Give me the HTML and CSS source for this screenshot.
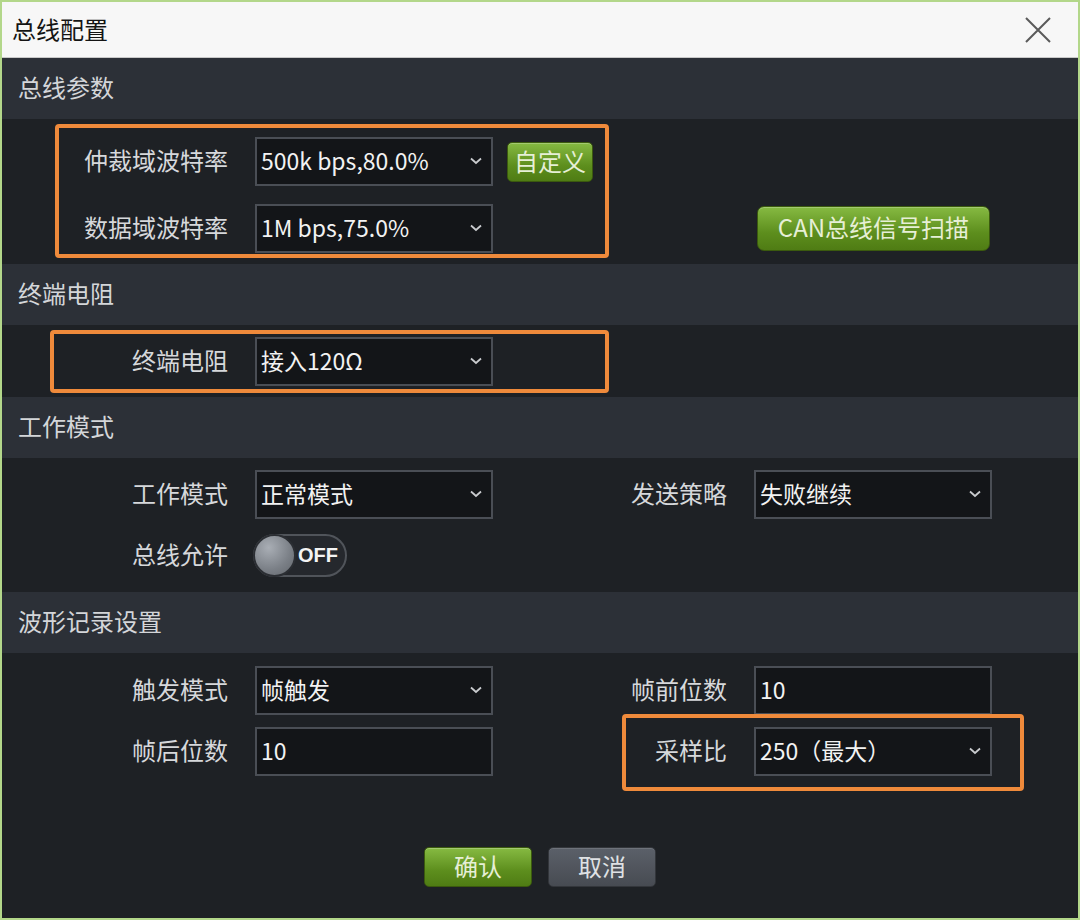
FILE: index.html
```html
<!DOCTYPE html>
<html lang="zh-CN">
<head>
  <meta charset="utf-8" />
  <title>总线配置</title>
  <link rel="stylesheet" href="styles.css">
</head>
<body>
  <div class="dialog">
    <div class="titlebar">
      <span class="title">总线配置</span>
      <svg class="close" viewBox="0 0 26 26" width="26" height="26">
        <path d="M1 1 L25 25 M25 1 L1 25" stroke="#5a5a5a" stroke-width="2" fill="none" />
      </svg>
    </div>

    <div class="group-head">总线参数</div>
    <div class="group-body body-bus">
      <div class="form-grid gap-wide">
        <span class="lbl">仲裁域波特率</span>
        <div class="select">500k bps,80.0%<svg class="chev" viewBox="0 0 12 8"><path d="M1 1.5 L6 6 L11 1.5" /></svg></div>
        <div class="cell"><button class="btn green btn-custom">自定义</button></div>
        <div></div>

        <span class="lbl">数据域波特率</span>
        <div class="select">1M bps,75.0%<svg class="chev" viewBox="0 0 12 8"><path d="M1 1.5 L6 6 L11 1.5" /></svg></div>
        <div></div>
        <div class="cell"><button class="btn green btn-scan">CAN总线信号扫描</button></div>
      </div>
      <div class="mark mark-bus"></div>
    </div>

    <div class="group-head">终端电阻</div>
    <div class="group-body body-term">
      <div class="form-grid">
        <span class="lbl">终端电阻</span>
        <div class="select">接入120Ω<svg class="chev" viewBox="0 0 12 8"><path d="M1 1.5 L6 6 L11 1.5" /></svg></div>
      </div>
      <div class="mark mark-term"></div>
    </div>

    <div class="group-head">工作模式</div>
    <div class="group-body body-mode">
      <div class="form-grid">
        <span class="lbl">工作模式</span>
        <div class="select">正常模式<svg class="chev" viewBox="0 0 12 8"><path d="M1 1.5 L6 6 L11 1.5" /></svg></div>
        <span class="lbl">发送策略</span>
        <div class="select">失败继续<svg class="chev" viewBox="0 0 12 8"><path d="M1 1.5 L6 6 L11 1.5" /></svg></div>

        <span class="lbl">总线允许</span>
        <div class="cell">
          <div class="toggle"><span class="knob"></span><span class="toggle-text">OFF</span></div>
        </div>
      </div>
    </div>

    <div class="group-head">波形记录设置</div>
    <div class="group-body body-wave">
      <div class="form-grid">
        <span class="lbl">触发模式</span>
        <div class="select">帧触发<svg class="chev" viewBox="0 0 12 8"><path d="M1 1.5 L6 6 L11 1.5" /></svg></div>
        <span class="lbl">帧前位数</span>
        <div class="select">10</div>

        <span class="lbl">帧后位数</span>
        <div class="select">10</div>
        <span class="lbl">采样比</span>
        <div class="select">250（最大）<svg class="chev" viewBox="0 0 12 8"><path d="M1 1.5 L6 6 L11 1.5" /></svg></div>
      </div>
      <div class="actions">
        <button class="btn green btn-action">确认</button>
        <button class="btn gray btn-action">取消</button>
      </div>
      <div class="mark mark-ratio"></div>
    </div>
  </div>
</body>
</html>
```

FILE: styles.css
```css
body {
  margin: 0;
  background: #1e2125;
  font-family: "Noto Sans CJK SC", "Noto Sans", sans-serif;
}

.dialog {
  width: 1080px;
  height: 920px;
  box-sizing: border-box;
  border: 2px solid #b3d78a;
  box-shadow: inset 0 0 0 1px #4a5a32;
  background: #1e2125;
  display: flex;
  flex-direction: column;
  overflow: hidden;
}

.titlebar {
  height: 56px;
  flex: none;
  background: #f7f7f7;
  border-bottom: 1px solid #c9c9c9;
  box-sizing: border-box;
  display: flex;
  align-items: center;
  justify-content: space-between;
  padding: 0 27px 0 10px;
}

.title {
  font-size: 24px;
  color: #141414;
  margin-bottom: 3px;
}

.close {
  display: block;
}

.group-head {
  height: 61px;
  flex: none;
  box-sizing: border-box;
  background: #2c3037;
  color: #d4d6d9;
  font-size: 24px;
  display: flex;
  align-items: center;
  padding: 0 0 4px 16px;
}

.group-body {
  position: relative;
  background: #1e2125;
}

.body-bus {
  height: 145px;
  padding-top: 18px;
  box-sizing: border-box;
}

.body-term {
  height: 72px;
  padding-top: 12px;
  box-sizing: border-box;
}

.body-mode {
  height: 134px;
  padding-top: 12px;
  box-sizing: border-box;
}

.body-wave {
  flex: 1;
  padding-top: 13px;
}

.form-grid {
  display: grid;
  grid-template-columns: 226px 238px 207px 238px;
  grid-auto-rows: 49px;
  column-gap: 27px;
  row-gap: 12px;
}

.form-grid.gap-wide {
  row-gap: 18px;
}

.lbl {
  color: #d6d8db;
  font-size: 24px;
  text-align: right;
  align-self: center;
  margin-bottom: 5px;
}

.cell {
  display: flex;
  align-items: center;
}

.select {
  position: relative;
  box-sizing: border-box;
  height: 49px;
  background: #131518;
  border: 2px solid #4a4e55;
  color: #f2f2f2;
  font-size: 23px;
  display: flex;
  align-items: center;
  padding: 0 0 4px 4px;
}

.chev {
  position: absolute;
  right: 9px;
  top: 18px;
  width: 12px;
  height: 8px;
}

.chev path {
  fill: none;
  stroke: #c9cbce;
  stroke-width: 1.8;
}

.btn {
  font-family: inherit;
  font-size: 24px;
  border-radius: 5px;
  cursor: pointer;
  padding: 0 0 4px;
}

.btn.green {
  background: linear-gradient(#86ba42, #5d8e1d 60%, #4f7c14);
  border: 1px solid #3b5a0e;
  color: #e6efd6;
  box-shadow: inset 0 1px 0 rgba(255, 255, 255, 0.25);
}

.btn.gray {
  background: linear-gradient(#5b6069, #474b52);
  border: 1px solid #33363b;
  color: #dfe1e4;
  box-shadow: inset 0 1px 0 rgba(255, 255, 255, 0.12);
}

.btn-custom {
  width: 86px;
  height: 40px;
  margin-left: -13px;
}

.btn-scan {
  width: 233px;
  height: 45px;
  margin-left: 3px;
  border-radius: 7px;
}

.toggle {
  width: 94px;
  height: 43px;
  box-sizing: border-box;
  border-radius: 22px;
  background: #25282d;
  border: 2px solid #50545a;
  display: flex;
  align-items: center;
  margin-left: -2px;
}

.knob {
  width: 43px;
  height: 43px;
  flex: none;
  margin-left: -2px;
  box-sizing: border-box;
  border-radius: 50%;
  border: 2px solid #2b2e33;
  background: radial-gradient(circle at 35% 30%, #a9aeb5, #7a7f86 60%, #63676d);
}

.toggle-text {
  color: #f4f4f4;
  font-family: "Liberation Sans", sans-serif;
  font-weight: bold;
  font-size: 20px;
  margin-left: 2px;
}

.actions {
  display: flex;
  justify-content: center;
  gap: 16px;
  margin-top: 71px;
}

.btn-action {
  width: 108px;
  height: 40px;
}

.mark {
  position: absolute;
  border: 4px solid #ef8a3b;
  border-radius: 4px;
  box-sizing: border-box;
  pointer-events: none;
}

.mark-bus {
  left: 53px;
  top: 5px;
  width: 554px;
  height: 134px;
}

.mark-term {
  left: 48px;
  top: 5px;
  width: 559px;
  height: 63px;
}

.mark-ratio {
  left: 620px;
  top: 61px;
  width: 402px;
  height: 77px;
}
```
